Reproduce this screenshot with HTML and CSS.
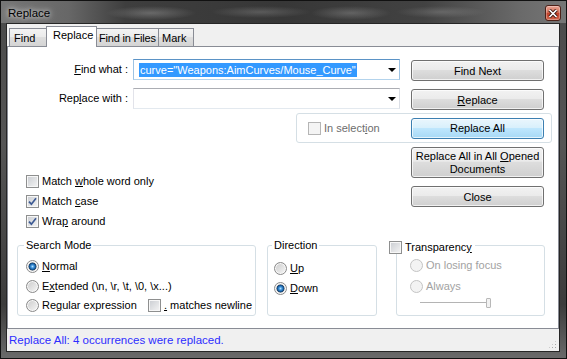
FILE: index.html
```html
<!DOCTYPE html>
<html lang="en">
<head>
    <meta charset="UTF-8">
    <title>Replace</title>
    <link rel="stylesheet" href="styles.css">
</head>
<body>
    <div class="window">
        <div class="titlebar">
            <span class="title">Replace</span>
            <button class="close-btn" aria-label="Close">
                <svg width="10" height="9" viewBox="0 0 10 9"><path d="M1.5 1L8.5 8M8.5 1L1.5 8" stroke="#3a1710" stroke-width="3.4"/><path d="M1.5 1L8.5 8M8.5 1L1.5 8" stroke="#fff" stroke-width="1.7"/></svg>
            </button>
        </div>
        <div class="client">
            <div class="tabs">
                <div class="tab tab-find">Find</div>
                <div class="tab tab-replace active">Replace</div>
                <div class="tab tab-files">Find in Files</div>
                <div class="tab tab-mark">Mark</div>
            </div>

            <div class="page">
                <div class="row">
                    <label class="field-label"><u>F</u>ind what :</label>
                    <div class="combo focus">
                        <span class="sel">curve="Weapons:AimCurves/Mouse_Curve"</span>
                        <svg class="arrow" width="8" height="4" viewBox="0 0 8 4"><path d="M0 0H8L4 4Z"/></svg>
                    </div>
                    <button class="btn">Find Next</button>
                </div>
                <div class="row">
                    <label class="field-label">Rep<u>l</u>ace with :</label>
                    <div class="combo">
                        <svg class="arrow" width="8" height="4" viewBox="0 0 8 4"><path d="M0 0H8L4 4Z"/></svg>
                    </div>
                    <button class="btn"><u>R</u>eplace</button>
                </div>

                <div class="selbox">
                    <label class="opt disabled"><span class="box"></span><span>In select<u>i</u>on</span></label>
                    <button class="btn hot">Replace All</button>
                </div>

                <div class="middle">
                    <div class="opts">
                        <label class="opt"><span class="box"></span><span>Match <u>w</u>hole word only</span></label>
                        <label class="opt"><span class="box checked"><svg width="9" height="9" viewBox="0 0 9 9"><path d="M1 4.6L3.4 7.2L8 1.2" fill="none" stroke="#3d5a93" stroke-width="1.7"/></svg></span><span>Match <u>c</u>ase</span></label>
                        <label class="opt"><span class="box checked"><svg width="9" height="9" viewBox="0 0 9 9"><path d="M1 4.6L3.4 7.2L8 1.2" fill="none" stroke="#3d5a93" stroke-width="1.7"/></svg></span><span>Wra<u>p</u> around</span></label>
                    </div>
                    <div class="side">
                        <button class="btn tall">Replace All in All <u>O</u>pened<br>Documents</button>
                        <button class="btn">Close</button>
                    </div>
                </div>

                <div class="groups">
                    <div class="group g-search">
                        <span class="legend">Search Mode</span>
                        <label class="opt"><span class="radio on"></span><span><u>N</u>ormal</span></label>
                        <label class="opt"><span class="radio"></span><span>E<u>x</u>tended (\n, \r, \t, \0, \x...)</span></label>
                        <div class="opt-row">
                            <label class="opt opt-wide"><span class="radio"></span><span>Re<u>g</u>ular expression</span></label>
                            <label class="opt"><span class="box"></span><span><u>.</u> matches newline</span></label>
                        </div>
                    </div>
                    <div class="group g-dir">
                        <span class="legend">Direction</span>
                        <label class="opt"><span class="radio"></span><span><u>U</u>p</span></label>
                        <label class="opt"><span class="radio on"></span><span><u>D</u>own</span></label>
                    </div>
                    <div class="group g-trans">
                        <label class="legend legend-check"><span class="box"></span><span>Transparenc<u>y</u></span></label>
                        <label class="opt faded"><span class="radio off"></span><span>On losing focus</span></label>
                        <label class="opt faded"><span class="radio off"></span><span>Always</span></label>
                        <div class="slider"><span class="thumb"></span></div>
                    </div>
                </div>
            </div>

            <div class="status">
                <span>Replace All: 4 occurrences were replaced.</span>
                <span class="grip"></span>
            </div>
        </div>
    </div>
</body>
</html>
```

FILE: styles.css
```css
* { box-sizing: border-box; }
body { margin: 0; background: #1e1e1e; font-family: "Liberation Sans", Arial, sans-serif; font-size: 11px; color: #000; }
u { text-decoration: underline; text-underline-offset: 1px; }

/* window frame */
.window { width: 567px; height: 359px; display: flex; flex-direction: column; border: 1px solid #111; padding: 0 6px 6px 5px; background: linear-gradient(#4a4a4a, #555 40%, #3c3c3c 85%, #6a6a6a); }
.titlebar { height: 22px; margin: 0 -6px 0 -5px; display: flex; align-items: flex-start; padding-left: 7px;
    background:
        radial-gradient(ellipse 45px 7px at 150px 12px, rgba(170,170,170,.4), transparent),
        radial-gradient(ellipse 50px 6px at 260px 11px, rgba(170,170,170,.3), transparent),
        radial-gradient(ellipse 40px 7px at 350px 12px, rgba(170,170,170,.35), transparent),
        radial-gradient(ellipse 45px 6px at 440px 11px, rgba(170,170,170,.3), transparent),
        linear-gradient(90deg, #767676 0, #676767 12%, #3e3e3e 22%, #373737 50%, #424242 75%, #6a6a6a 92%, #767676 100%); }
.title { font-size: 11.5px; line-height: 22px; margin-top: 1px; text-shadow: 0 0 5px rgba(255,255,255,.85), 0 0 9px rgba(255,255,255,.6); }
.close-btn { margin: 4px 5px 0 auto; width: 16px; height: 16px; padding: 0; display: flex; align-items: center; justify-content: center; border: 1px solid #4e2118; border-radius: 3px; background: linear-gradient(#e9a595, #d77059 45%, #c3412a 52%, #d0644b); box-shadow: inset 0 0 0 1px rgba(255,255,255,.3); }

.client { flex: 1; display: flex; flex-direction: column; border: 1px solid #262626; background: #f0f0f0; }

/* tabs */
.tabs { height: 22px; display: flex; align-items: flex-end; padding-left: 2px; }
.tab { height: 18px; line-height: 18px; padding-left: 4px; white-space: nowrap; border: 1px solid #898c95; border-bottom: none; background: linear-gradient(#f3f3f3, #ebebeb 45%, #dedede 50%, #d4d4d4); }
.tab + .tab { margin-left: -1px; }
.tab-find { width: 38px; }
.tab-replace { width: 51px; padding-left: 6px; }
.tab-files { width: 63px; padding-left: 2px; letter-spacing: -0.2px; }
.tab-mark { width: 36px; padding-left: 3px; }
.tab.active { position: relative; z-index: 1; height: 21px; margin-bottom: -1px; line-height: 17px; background: #fff; }

/* page */
.page { height: 283px; border: 1px solid #898c95; background: #fff; padding-top: 12px; }
.row { display: flex; align-items: flex-start; height: 21px; }
.row + .row { margin-top: 8px; }
.field-label { width: 120px; text-align: right; line-height: 21px; }
.combo { margin-left: 5px; width: 267px; height: 21px; display: flex; align-items: center; padding: 0 3px 0 5px; border: 1px solid; border-color: #abadb3 #dbdfe6 #e3e9ef #e2e3ea; }
.combo.focus { border-color: #5b93c6 #9ec3e3 #b3d3ec #9ec3e3; }
.combo .sel { background: #3399ff; color: #fff; padding: 0 1px; line-height: 14px; }
.combo .arrow { margin-left: auto; }

.btn { width: 133px; height: 21px; margin: 1px 0 0 11px; padding: 0; font: inherit; color: #000; border: 1px solid #707070; border-radius: 3px; background: linear-gradient(#f2f2f2, #ebebeb 45%, #dddddd 50%, #cfcfcf); box-shadow: inset 0 0 0 1px rgba(255,255,255,.7); }
.btn.hot { border-color: #3c7fb1; background: linear-gradient(#eaf6fd, #d9f0fc 45%, #bee6fd 50%, #a7d9f5); }
.btn.tall { height: 31px; line-height: 13px; }

.selbox { margin: 4px 0 0 288px; width: 256px; height: 30px; display: flex; align-items: center; padding: 0 7px 0 11px; border: 1px solid #d5dfe5; border-radius: 3px; }
.selbox .btn { margin: 0 0 0 auto; }

.middle { display: flex; margin-top: 4px; }
.opts { display: flex; flex-direction: column; gap: 7px; padding: 28px 0 0 18px; }
.side { display: flex; flex-direction: column; gap: 8px; margin: 0 14px 0 auto; }
.side .btn { margin: 0; }

/* checkboxes and radios */
.opt { display: flex; align-items: center; gap: 3px; height: 13px; line-height: 13px; white-space: nowrap; }
.opt-row { display: flex; align-items: center; height: 13px; }
.opt-wide { width: 122px; }
.box { width: 13px; height: 13px; flex: none; display: flex; align-items: center; justify-content: center; border: 1px solid #8e8f8f; background: linear-gradient(135deg, #c9ccd1, #f5f5f5); box-shadow: inset 0 0 0 1px #f7f7f7; }
.disabled { color: #6d6d6d; }
.disabled .box { border-color: #b5b5b5; background: #f4f4f4; box-shadow: none; }
.radio { width: 13px; height: 13px; flex: none; border-radius: 50%; border: 1px solid #8a8a8a; background: linear-gradient(135deg, #cacaca, #f7f7f7); box-shadow: inset 0 0 0 1px #f8f8f8; }
.radio.on { background: radial-gradient(circle, #b5e3ff 0, #4a9be0 1.4px, #12589a 3px, #2b4765 3.7px, #dadada 4.3px, #f4f4f4 5.5px); }
.radio.off { border-color: #c4c4c4; background: #f3f3f3; box-shadow: none; }
.faded { color: #a2a2a2; }

/* group boxes */
.groups { display: flex; margin-top: 17px; padding-left: 9px; }
.group { position: relative; height: 71px; border: 1px solid #d5dfe5; border-radius: 3px; display: flex; flex-direction: column; gap: 7px; }
.g-search { width: 239px; padding: 14px 0 0 8px; gap: 6.5px; }
.g-dir { width: 110px; margin-left: 11px; padding: 16px 0 0 6px; }
.g-trans { width: 149px; margin-left: 19px; padding: 13px 0 0 13px; gap: 8px; }
.legend { position: absolute; top: -7px; left: 6px; padding: 0 2px; line-height: 13px; background: #fff; }
.g-dir .legend { left: 4px; }
.legend-check { display: flex; align-items: center; gap: 3px; top: -5px; left: -8px; padding: 0 3px 0 0; }

.slider { position: relative; width: 71px; height: 10px; margin: -3px 0 0 10px; }
.slider::before { content: ""; position: absolute; left: 0; right: 3px; top: 4px; height: 2px; border-top: 1px solid #b4b4b4; border-bottom: 1px solid #fff; }
.thumb { position: absolute; right: 0; top: 0; width: 5px; height: 10px; border: 1px solid #b8b8b8; border-radius: 1px; background: #f2f2f2; }

/* status bar */
.status { flex: 1; display: flex; align-items: center; padding-left: 2px; color: #2d2dff; font-size: 11.5px; }
.grip { margin: auto 2px 2px auto; width: 9px; height: 9px; background-image: radial-gradient(circle, #a7a7a7 0.8px, transparent 1px); background-size: 3px 3px; clip-path: polygon(100% 0, 100% 100%, 0 100%); }
```
